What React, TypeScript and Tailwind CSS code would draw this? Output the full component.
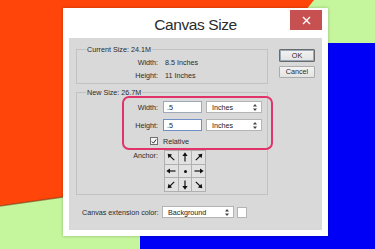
const Arrow = ({ angle }: { angle: number }) => (
  <svg width="10" height="10" viewBox="0 0 10 10">
    <g transform={`rotate(${angle} 5 5)`}>
      <line x1="5" y1="9.5" x2="5" y2="3" stroke="#111" strokeWidth="1.2" />
      <polygon points="5,0.3 2.4,4 7.6,4" fill="#111" />
    </g>
  </svg>
);

const UpDown = () => (
  <svg width="4" height="7" viewBox="0 0 4 7">
    <polygon points="2,0 4,2.6 0,2.6" fill="#444" />
    <polygon points="0,4.4 4,4.4 2,7" fill="#444" />
  </svg>
);

const Select = ({ value, width }: { value: string; width: string }) => (
  <div
    className={`${width} h-[12px] flex items-center justify-between bg-white border border-[#b4b4b4] pl-[5px] pr-[4px] text-[#222]`}
  >
    <span>{value}</span>
    <UpDown />
  </div>
);

const cells = [315, 0, 45, 270, -1, 90, 225, 180, 135];

export default function App() {
  return (
    <div className="relative w-[375px] h-[249px] overflow-hidden font-['Liberation_Sans',Arial,sans-serif] text-[7.2px] leading-[9px] text-[#2a2a2a]">
      <svg className="absolute inset-0" width="375" height="249" viewBox="0 0 375 249">
        <rect width="375" height="249" fill="#c5f59c" />
        <path d="M0 0H314L290 30L120 188Q60 198 0 206Z" fill="#ff450a" />
        <path d="M120 188Q60 198 0 206" stroke="#6b3a1a" strokeOpacity="0.55" fill="none" strokeWidth="1.3" />
        <rect x="140" y="43" width="235" height="206" fill="#0000f6" />
      </svg>

      <div className="relative ml-[63px] mt-[8px] w-[265px] h-[228px] bg-white shadow-[0_0_3px_rgba(0,0,0,0.25)] flex flex-col">
        {/* title bar */}
        <div className="relative h-[29.5px] flex items-center justify-center">
          <span className="text-[15.5px] leading-none tracking-[-0.4px] text-[#2b2b2b] pt-[3px]">Canvas Size</span>
          <div className="absolute right-[6px] top-[2px] w-[32px] h-[20px] bg-[#c75050] flex items-center justify-center">
            <svg width="9" height="9" viewBox="0 0 9 9">
              <path d="M1 1L8 8M8 1L1 8" stroke="#fff" strokeWidth="1.4" />
            </svg>
          </div>
        </div>

        {/* gray panel */}
        <div className="relative mx-[6px] mb-[6px] flex-1 bg-[#d9d9d9] pt-[7px] pl-[7px]">
          <div className="flex">
            <div className="w-[192px] flex flex-col gap-[4px]">
              <fieldset className="h-[39px] border border-[#c2c2c2]">
                <legend className="ml-[9px] px-[1px]">Current Size: 24.1M</legend>
                <div className="grid grid-cols-[81px_auto] gap-x-[7px] gap-y-[4px] mt-[4px]">
                  <span className="text-right">Width:</span>
                  <span>8.5 Inches</span>
                  <span className="text-right">Height:</span>
                  <span>11 Inches</span>
                </div>
              </fieldset>

              <fieldset className="h-[107.5px] border border-[#c2c2c2]">
                <legend className="ml-[9px] px-[1px]">New Size: 26.7M</legend>
                <div className="grid grid-cols-[81px_auto] gap-x-[5px] mt-[4.5px] items-center">
                  <span className="text-right">Width:</span>
                  <div className="flex gap-[4px]">
                    <div className="w-[39px] h-[12px] bg-white border border-[#9fa8b8] pl-[3px] flex items-center text-[#222]">.5</div>
                    <Select value="Inches" width="w-[56px]" />
                  </div>
                  <span className="text-right mt-[6px]">Height:</span>
                  <div className="flex gap-[4px] mt-[6px]">
                    <div className="w-[39px] h-[12px] bg-white border border-[#6f8fc8] pl-[3px] flex items-center text-[#222]">.5</div>
                    <Select value="Inches" width="w-[56px]" />
                  </div>
                  <div className="flex justify-end mt-[4px] h-[12px] items-center">
                    <div className="w-[8px] h-[8px] bg-[#f4f4f4] border border-[#707070] flex items-center justify-center">
                      <svg width="7" height="7" viewBox="0 0 7 7">
                        <path d="M1 3.6L2.8 5.4L6 1.2" stroke="#222" strokeWidth="1.1" fill="none" />
                      </svg>
                    </div>
                  </div>
                  <span className="mt-[4px] h-[12px] flex items-center">Relative</span>
                  <span className="text-right self-start mt-[4px]">Anchor:</span>
                  <div className="mt-[3px] ml-[1px] grid grid-cols-[repeat(3,13.7px)] w-fit border-t border-l border-[#b0b0b0]">
                    {cells.map((a, i) => (
                      <div
                        key={i}
                        className="h-[13.7px] border-r border-b border-[#b0b0b0] bg-[#e2e2e2] flex items-center justify-center"
                      >
                        {a < 0 ? <div className="w-[3px] h-[3px] rounded-full bg-[#111]" /> : <Arrow angle={a} />}
                      </div>
                    ))}
                  </div>
                </div>
              </fieldset>
            </div>

            <div className="ml-[11px] mt-[4.5px] flex flex-col gap-[4px]">
              <div className="w-[36px] h-[12.5px] flex items-center justify-center border border-[#6b6b6b] rounded-[1px] bg-[linear-gradient(#f3f3f3,#e3e3e3)] shadow-[inset_0_0_0_1px_#9ab]">
                OK
              </div>
              <div className="w-[36px] h-[12.5px] flex items-center justify-center border border-[#acacac] rounded-[1px] bg-[linear-gradient(#f3f3f3,#e3e3e3)]">
                Cancel
              </div>
            </div>
          </div>

          <div className="flex items-center mt-[11px] ml-[6px]">
            <span className="w-[76px] shrink-0 whitespace-nowrap">Canvas extension color:</span>
            <div className="ml-[4px]">
              <Select value="Background" width="w-[72px]" />
            </div>
            <div className="ml-[3px] w-[10px] h-[11px] bg-white border border-[#b4b4b4]" />
          </div>

          <div className="absolute left-[53px] top-[58.5px] w-[151px] h-[54px] border-2 border-[#e0336a] rounded-[7px]" />
        </div>
      </div>
    </div>
  );
}
